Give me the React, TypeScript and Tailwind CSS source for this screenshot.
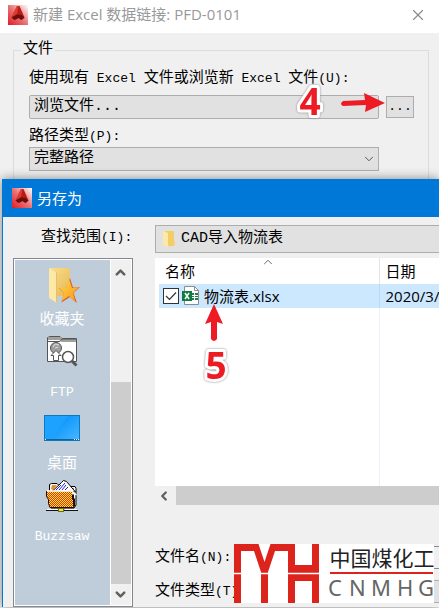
import type { ReactNode } from "react"
import { ChevronDown, ChevronLeft, ChevronUp, X } from "lucide-react"

const dialogFont = "font-['Liberation_Mono','Noto_Sans_CJK_SC',monospace]"
const systemFont = "font-['Open_Sans','Noto_Sans_CJK_SC',sans-serif]"

// half-width characters sit next to 15px chinese glyphs
function Half({ children }: { children: ReactNode }) {
  return <span className="text-[13px] whitespace-pre">{children}</span>
}

function AppLogo() {
  return (
    <svg viewBox="0 0 20 20" className="size-5 shrink-0">
      <defs>
        <linearGradient id="logo-bg" x1="0" y1="1" x2="1" y2="0">
          <stop offset="0" stopColor="#e01c24" />
          <stop offset="0.5" stopColor="#ea7478" />
          <stop offset="1" stopColor="#ffffff" />
        </linearGradient>
      </defs>
      <rect width="20" height="20" fill="url(#logo-bg)" />
      <path d="M9 1h2.500L16.500 12.500 13.500 15l-3-2-4 2-3-2.500z" fill="#b81c14" />
      <path d="M9 1h1.500L9 9l-5.500 3.500z" fill="#dc3c30" />
      <path d="M3.500 12.500L9 9.500l4.500.5 3 2.500-3 2.500-3-2-4 2z" fill="#6a0f0c" />
    </svg>
  )
}

function FolderIcon() {
  return (
    <svg viewBox="0 0 14 18" className="h-[18px] w-[14px]">
      <path d="M3 1h9v15H3z" fill="#f3cd67" />
      <path d="M1 1l5 2v14l-5-2z" fill="#fde9a7" />
      <path d="M12 11h1v5h-2z" fill="#f6d57a" />
    </svg>
  )
}

function FavoritesIcon() {
  return (
    <svg viewBox="0 0 40 44" className="h-11 w-10">
      <defs>
        <linearGradient id="fav-back" x1="0" y1="0" x2="1" y2="1">
          <stop offset="0" stopColor="#fbe08d" />
          <stop offset="1" stopColor="#e5b753" />
        </linearGradient>
        <linearGradient id="fav-star" x1="0" y1="0" x2="1" y2="1">
          <stop offset="0" stopColor="#ffd94a" />
          <stop offset="1" stopColor="#f7941d" />
        </linearGradient>
      </defs>
      <path d="M7 5h21v28H14z" fill="url(#fav-back)" />
      <path d="M7 5l8 5v30l-8-5z" fill="#fde8a6" />
      <path d="M14 9l1 1v30l-1-1z" fill="#e6bf66" />
      <path d="M28 15l3 9.500 7-.5-6.500 6L35 40l-7-6-8.500 5.500L22 30l-5-5h7z" fill="#d8612a" />
      <path d="M27 16l3 9 7-1-6 6 2.500 9.500L27 33l-7.500 5 2.500-8-4.500-5H24z" fill="url(#fav-star)" />
    </svg>
  )
}

function FtpIcon() {
  return (
    <svg viewBox="0 0 40 44" className="h-11 w-10">
      <path d="M5.500 26.500v-24L8 1.500h10l2 2h14.500v23z" fill="#fff" stroke="#555" />
      <path d="M6 3.500h12l2.500 2H34" fill="none" stroke="#a0a0a0" strokeWidth="3" />
      <path d="M6 6.500h12l2-2.500h14" fill="none" stroke="#555" />
      <circle cx="14" cy="13" r="5.500" fill="#a0a0a0" stroke="#555" />
      <path d="M11 12l2-3 4 1M13 13l3-1" fill="none" stroke="#ddd" />
      <path d="M14 15.500l5 5h-2.500v5h-5v-5H9z" fill="#fff" stroke="#555" />
      <circle cx="26" cy="22" r="5.500" fill="#fff" stroke="#555" strokeWidth="1.500" />
      <path d="M30 26l4.500 4.500" stroke="#555" strokeWidth="3" />
    </svg>
  )
}

function DesktopIcon() {
  return (
    <svg viewBox="0 0 40 44" className="h-11 w-10">
      <defs>
        <linearGradient id="desk-shine" x1="0" y1="0" x2="1" y2="1">
          <stop offset="0.3" stopColor="#1098fc" />
          <stop offset="1" stopColor="#48b6ff" />
        </linearGradient>
      </defs>
      <rect x="2.500" y="8.500" width="35" height="25" fill="#1ea2ff" stroke="#0e78bd" />
      <path d="M26 9h11v24H9z" fill="url(#desk-shine)" />
      <path d="M3 32.500h34" stroke="#0e6399" />
      <path d="M3 32.500h1M32 32.500h1M34 32.500h1M36 32.500h1" stroke="#fff" />
    </svg>
  )
}

function BuzzsawIcon() {
  return (
    <svg viewBox="0 0 40 44" className="h-11 w-10">
      <defs>
        <clipPath id="folder-front">
          <path d="M4 12h26v3l1 1v4l1 1v7H7v-3l-1-1v-4l-2-3z" />
        </clipPath>
      </defs>
      <path d="M7.500 12V5.500l2-1H15l2 2h9l2 1h5l1 2V26l-2 3H9z" fill="#fff" stroke="#000" />
      <path d="M9 10l1-4h5l-4 5zM28 9h4v4h-3z" fill="#f09018" />
      <path d="M10.500 12l9-8.500 2-2 3 1 9 10.500z" fill="#fff" stroke="#000" />
      <path d="M14 11l5-5M17 11l6-7M20 11l4-5M23 11l3-3" stroke="#2020e0" />
      <g clipPath="url(#folder-front)">
        <rect x="4" y="12" width="28" height="17" fill="#fff01c" />
        {Array.from({ length: 16 }, (_, row) => (
          <path key={row} d={`M${4 + (row % 2)} ${12.5 + row}h28`} stroke="#e82814" strokeDasharray="1 1" />
        ))}
      </g>
      <path d="M4.500 12.500v5l2 3v4l1.500 4h24" fill="none" stroke="#111" />
      <path d="M31 15.500v4l1 1v7" fill="none" stroke="#111" strokeWidth="2" />
      <path d="M5 12h24.500l5 4" fill="none" stroke="#fff" strokeWidth="1.500" />
      <path d="M4 31.500h32" stroke="#111" />
      <path d="M5 30.500h11M23 30.500h12" stroke="#fff" />
      <rect x="16.500" y="29.500" width="5" height="3" fill="#e4e080" stroke="#707000" />
    </svg>
  )
}

function ExcelIcon() {
  return (
    <svg viewBox="0 0 18 20" className="h-5 w-[18px] shrink-0">
      <path d="M2.500.5h10l4 4v14h-14z" fill="#fff" stroke="#8c8c8c" />
      <path d="M12.500.5v4h4" fill="none" stroke="#8c8c8c" />
      <path d="M10 7h2v2h-2zM13 7h3v2h-3zM10 10h2v1h-2zM13 10h3v1h-3zM10 12h2v2h-2zM13 12h3v2h-3z" fill="#1f7f4c" />
      <rect y="5" width="10" height="10" fill="#107c41" />
      <path d="M3 7l4 6M7 7l-4 6" stroke="#fff" strokeWidth="1.500" />
    </svg>
  )
}

function Watermark() {
  return (
    <svg
      viewBox="0 0 200 59"
      role="img"
      aria-label="中国煤化工 CNMHG"
      className="absolute left-[231px] top-[365px] h-[59px] w-[200px] bg-white font-['Noto_Sans','Noto_Sans_CJK_SC',sans-serif]"
    >
      <path
        d="M0 0h24.500l6 18 6-18H61v21h17V0h7v59h-7V37H61v22h-7V7h-13l-7 21v31h-7V28L20 7H7v52H0z"
        fill="#dc241d"
      />
      <path d="M0 29.500h85" stroke="#fff" strokeWidth="1.500" />
      <text x="95.500" y="21.500" fontSize="21" fill="#222">中国煤化工</text>
      <path d="M96 29h103" stroke="#dc241d" strokeWidth="2" />
      <text x="94 115 137 163 184" y="52" fontSize="22" fill="#666">CNMHG</text>
    </svg>
  )
}

const places = [
  { label: "收藏夹", icon: <FavoritesIcon /> },
  { label: <Half>FTP</Half>, icon: <FtpIcon /> },
  { label: "桌面", icon: <DesktopIcon /> },
  { label: <Half>Buzzsaw</Half>, icon: <BuzzsawIcon /> },
]

function PlacesBar() {
  return (
    <nav className="flex h-[349px] w-[120px] shrink-0 border border-[#828790] bg-[#f0f0f0] p-px outline-1 -outline-offset-2 outline-white">
      <ul className="w-24 border-r border-white bg-[#bfcddb] pr-px pt-[3px]">
        {places.map((place, i) => (
          <li key={i}>
            <button className="flex h-[72px] w-full flex-col items-center text-[15px] leading-7 text-white">
              {place.icon}
              <span>{place.label}</span>
            </button>
          </li>
        ))}
      </ul>
      <div className="flex flex-1 flex-col">
        <button aria-label="向上滚动" className="flex h-6 items-center pl-[2px]">
          <ChevronUp size={15} strokeWidth={4} color="#606060" />
        </button>
        <div className="mt-[98px] flex-1 bg-[#cdcdcd]" />
        <button aria-label="向下滚动" className="flex h-[21px] items-center pl-[2px]">
          <ChevronDown size={15} strokeWidth={4} color="#606060" />
        </button>
      </div>
    </nav>
  )
}

function FileList() {
  return (
    <div className={`mt-[5px] h-[228px] bg-white ${systemFont}`}>
      <div className="relative flex h-full">
        <table className="h-full w-[390px] table-fixed border-collapse text-left text-[15px] leading-6">
          <thead>
            <tr className="h-[26px]">
              <th className="w-[224px] border-r border-[#e5e5e5] pl-[10px] font-normal">名称</th>
              <th className="pl-[6px] font-normal">日期</th>
            </tr>
          </thead>
          <tbody>
            <tr className="h-6">
              <td className="border-r border-[#b8dcf8] p-0 pl-1">
                <label className="flex h-6 items-center bg-[#cce8ff] pl-1">
                  <span className="relative mr-[3px] flex size-4">
                    <input
                      type="checkbox"
                      defaultChecked
                      className="peer size-4 appearance-none border border-[#333] bg-white"
                    />
                    <svg viewBox="0 0 16 16" className="pointer-events-none absolute inset-0 hidden peer-checked:block">
                      <path d="M3 8l3.500 3.500L13 4.500" fill="none" stroke="#333" strokeWidth="1.200" />
                    </svg>
                  </span>
                  <ExcelIcon />
                  <span className="ml-1">物流表.xlsx</span>
                </label>
              </td>
              <td className="whitespace-nowrap bg-[#cce8ff] p-0 pl-[6px]">2020/3/</td>
            </tr>
            <tr>
              <td className="border-r border-[#e8f1fa]" />
              <td />
            </tr>
          </tbody>
        </table>
        <ChevronUp size={14} strokeWidth={1.5} color="#555" className="absolute left-[106px] -top-[3px]" />
      </div>
    </div>
  )
}

// numbered step marks drawn on top of both windows
function StepMarks() {
  return (
    <svg viewBox="0 0 439 400" className="pointer-events-none absolute left-0 top-0 h-[400px] w-[439px]">
      <path d="M343 101l22-1-1-7 21 10-20 9 1-7-23 1q-4-2 0-5z" fill="#ed1c24" />
      <path d="M214 304l9 20-6-2v17q-3 4-6 0v-17l-6 2z" fill="#ed1c24" />
      <g
        fontSize="37"
        fontWeight="700"
        textAnchor="middle"
        strokeLinejoin="round"
        fill="#ed1c24"
        stroke="#fff"
        strokeWidth="6"
        className="font-['Open_Sans',sans-serif] drop-shadow-[0_0_1px_#888]"
        style={{ paintOrder: "stroke" }}
      >
        <text x="310" y="115">4</text>
        <text x="216" y="379">5</text>
      </g>
    </svg>
  )
}

function LinkDialog() {
  return (
    <section className="h-[179px]">
      <header className={`flex h-[33px] items-center bg-white pb-1 pl-2 pr-3 text-[15px] text-[#999] ${systemFont}`}>
        <AppLogo />
        <h1 className="ml-[5px] flex-1">新建 Excel 数据链接: PFD-0101</h1>
        <button aria-label="关闭">
          <X size={18} strokeWidth={1.5} color="#888" />
        </button>
      </header>
      <fieldset className="ml-[13px] mr-[10px] mt-[5px] h-[141px] border border-b-0 border-[#dcdcdc] pl-[15px] pr-[14px]">
        <legend className="-ml-2 px-[2px] text-[15px] leading-6">文件</legend>
        <label htmlFor="source" className="mt-[7px] block whitespace-nowrap text-[15px] leading-5">
          使用现有<Half> Excel </Half>文件或浏览新<Half> Excel </Half>文件<Half>(U):</Half>
        </label>
        <div className="mt-[6px] flex items-center gap-[7px]">
          <select id="source" className="h-6 w-[350px] appearance-none rounded-xs border border-[#adadad] bg-[#e1e1e1] pl-1 text-[15px] leading-5">
            <option>浏览文件...</option>
          </select>
          <button className="h-[22px] w-7 border border-[#adadad] bg-[#e1e1e1] text-[13px] leading-5">...</button>
        </div>
        <label htmlFor="path-type" className="mt-[8px] block text-[15px] leading-5">
          路径类型<Half>(P):</Half>
        </label>
        <div className="relative w-[350px]">
          <select id="path-type" className="block h-6 w-full appearance-none border border-[#adadad] bg-[#e1e1e1] pl-1 text-[15px] leading-5">
            <option>完整路径</option>
          </select>
          <ChevronDown size={14} strokeWidth={1.5} color="#444" className="pointer-events-none absolute right-[3px] top-[5px]" />
        </div>
      </fieldset>
    </section>
  )
}

function SaveDialog() {
  return (
    <section className="relative ml-[2px] border-l border-[#0078d7] bg-[#f0f0f0] shadow-[0_0_10px_rgba(0,0,0,0.45)]">
      <header className={`flex h-[38px] items-center bg-[#0078d7] pl-[9px] text-[15px] text-white ${systemFont}`}>
        <AppLogo />
        <h2 className="ml-[5px]">另存为</h2>
      </header>
      <div className="flex items-center pt-2">
        <label htmlFor="look-in" className="w-[152px] shrink-0 pb-[2px] pl-[38px] text-[15px] leading-6">
          查找范围<Half>(I):</Half>
        </label>
        <div className="relative min-w-0 flex-1">
          <select id="look-in" className="block h-7 w-full appearance-none border border-r-0 border-[#adadad] bg-[#e1e1e1] pl-[25px] text-[15px] leading-5">
            <option>CAD导入物流表</option>
          </select>
          <span className="pointer-events-none absolute left-[7px] top-[5px]">
            <FolderIcon />
          </span>
        </div>
      </div>
      <div className="flex pl-[10px]">
        <div className="pt-[5px]">
          <PlacesBar />
        </div>
        <div className="ml-[22px] min-w-0 flex-1 overflow-hidden">
          <FileList />
          <div className="flex h-[19px]">
            <button aria-label="向左滚动" className="flex w-[21px] items-center pl-[2px]">
              <ChevronLeft size={14} strokeWidth={4} color="#606060" />
            </button>
            <div className="flex-1 bg-[#cdcdcd]" />
          </div>
          <div className="mt-10 flex items-center">
            <label htmlFor="file-name" className="w-[100px] shrink-0 pt-[2px] text-[15px] leading-[22px]">
              文件名<Half>(N):</Half>
            </label>
            <input id="file-name" className="h-[23px] min-w-0 flex-1 border border-r-0 border-[#8a8a8a] bg-[#f0f0f0]" />
          </div>
          <div className="mt-[10px] flex items-center">
            <label htmlFor="file-type" className="w-[100px] shrink-0 pt-[2px] text-[15px] leading-[22px]">
              文件类型<Half>(T):</Half>
            </label>
            <select id="file-type" className="h-[23px] min-w-0 flex-1 appearance-none border border-r-0 border-[#adadad] bg-[#e1e1e1]" />
          </div>
        </div>
      </div>
      <Watermark />
    </section>
  )
}

export default function App() {
  return (
    <main className={`relative min-h-screen overflow-hidden bg-[#f0f0f0] text-black ${dialogFont}`}>
      <LinkDialog />
      <SaveDialog />
      <StepMarks />
    </main>
  )
}
